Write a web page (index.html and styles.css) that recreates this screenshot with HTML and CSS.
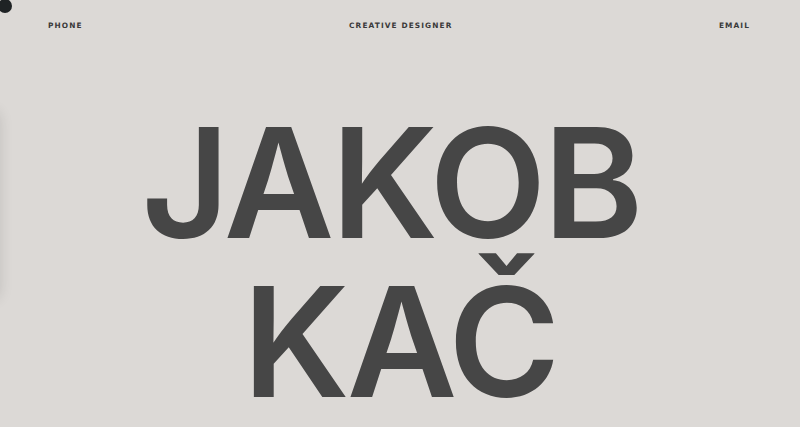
FILE: index.html
```html
<!DOCTYPE html>
<html>
<head>
<meta charset="utf-8">
<link rel="stylesheet" href="styles.css">
</head>
<body>
<div class="page">
  <header class="top">
    <span class="link">PHONE</span>
    <span class="link">CREATIVE DESIGNER</span>
    <span class="link">EMAIL</span>
  </header>
  <h1 class="name">
    <span class="line first">JAKOB</span>
    <span class="line">KAČ</span>
  </h1>
  <div class="edge"></div>
  <div class="cursor"></div>
</div>
</body>
</html>
```
FILE: styles.css
```css
html, body {
  margin: 0;
  padding: 0;
  background: #dcd9d6;
  overflow: hidden;
}
.page {
  position: relative;
  width: 800px;
  height: 427px;
  overflow: hidden;
}
.top {
  display: flex;
  justify-content: space-between;
  align-items: center;
  padding: 21px 50px 0 48px;
  height: 10px;
}
.link {
  font-family: "DejaVu Sans", sans-serif;
  font-weight: bold;
  font-size: 7.4px;
  letter-spacing: 1.1px;
  color: #3a3a3a;
  line-height: 10px;
}
.name {
  margin: 0;
  padding-top: 93px;
  font-family: "Inter", sans-serif;
  font-weight: 600;
  font-size: 152px;
  line-height: 118px;
  letter-spacing: -3px;
  color: #464646;
  text-align: center;
  display: flex;
  flex-direction: column;
  align-items: center;
  gap: 41px;
}
.line {
  display: block;
}
.first {
  padding-right: 18px;
}
.edge {
  position: absolute;
  left: -30px;
  top: 110px;
  width: 30px;
  height: 190px;
  border-radius: 10px;
  box-shadow: 0 0 14px rgba(0,0,0,0.12);
}
.cursor {
  position: absolute;
  left: -2px;
  top: -1px;
  width: 14px;
  height: 14px;
  border-radius: 50%;
  background: #1f2325;
}
```
